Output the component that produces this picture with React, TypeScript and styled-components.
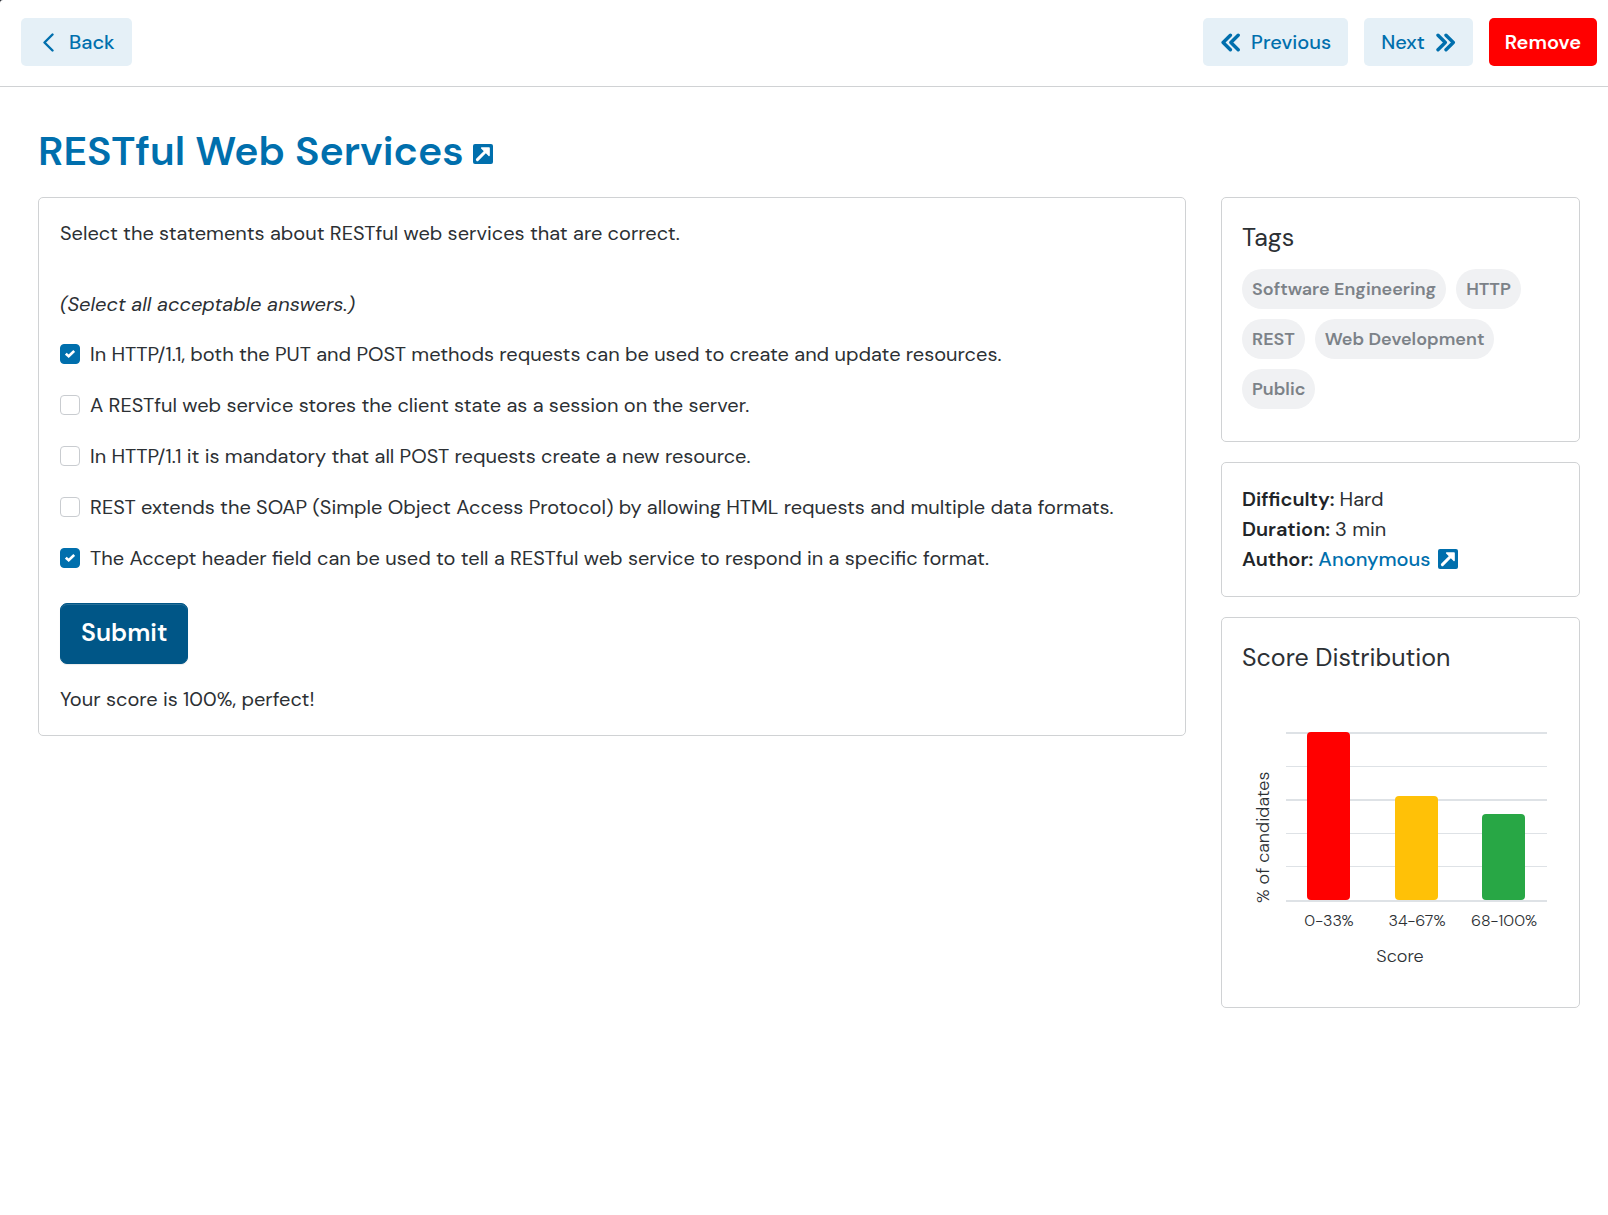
import React, { useState } from "react";
import styled, { createGlobalStyle, css } from "styled-components";

const blue = "#006fad";
const ink = "#2c3034";
const line = "#d0d2d4";

const GlobalStyle = createGlobalStyle`
  *, *::before, *::after { box-sizing: border-box; }
  html { background: #20242c; }
  body {
    margin: 0;
    color: ${ink};
    font-family: "DM Sans", Lato, "Open Sans", sans-serif;
    font-size: 20px;
    font-weight: 400;
    line-height: 30px;
  }
  h1, h2, p, dl, dd, ul, fieldset { margin: 0; padding: 0; border: 0; }
  button { font-family: inherit; cursor: pointer; }
`;

const Page = styled.div`
  min-height: 100vh;
  background: #fff;
  border-top-left-radius: 3px;
`;

const Toolbar = styled.header`
  display: flex;
  justify-content: space-between;
  padding: 18px 11px 20px 21px;
  border-bottom: 1px solid ${line};
`;

const ToolbarGroup = styled.nav`
  display: flex;
  gap: 16px;
`;

const Button = styled.button<{ $tone?: "soft" | "danger" }>`
  display: inline-flex;
  align-items: center;
  gap: 11px;
  height: 48px;
  padding: 0 17px;
  border: 0;
  border-radius: 5px;
  font-size: 20px;
  font-weight: 500;
  color: ${blue};
  background: #e5f0f7;
  ${({ $tone }) =>
    $tone === "danger" &&
    css`
      padding: 0 16px;
      color: #fff;
      background: #ff0000;
      font-weight: 600;
    `}
`;

const Main = styled.main`
  padding: 44px 28px 40px 38px;
`;

const Title = styled.h1`
  display: flex;
  align-items: center;
  gap: 9px;
  margin-bottom: 26px;
  font-size: 41px;
  line-height: 40px;
  font-weight: 600;
  color: ${blue};
`;

const IconLink = styled.a`
  display: inline-flex;
  padding-top: 6px;
  color: ${blue};
`;

const Columns = styled.div`
  display: grid;
  grid-template-columns: minmax(0, 1fr) 359px;
  gap: 35px;
  align-items: start;
`;

const Card = styled.section`
  padding: 20px;
  border: 1px solid ${line};
  border-radius: 5px;
`;

const QuestionCard = styled(Card)`
  padding: 20px 21px 21px;
`;

const Sidebar = styled.aside`
  display: grid;
  gap: 20px;
`;

const Hint = styled.p`
  margin: 41px 0 20px;
  font-style: italic;
`;

const Options = styled.fieldset`
  display: grid;
  gap: 20px;
`;

const Option = styled.label`
  display: flex;
  gap: 10px;
  line-height: 31px;
`;

const Box = styled.span`
  display: grid;
  flex: none;
  place-items: center;
  align-self: start;
  width: 20px;
  height: 30px;
  & > * { grid-area: 1 / 1; }
  svg { pointer-events: none; }
`;

const Check = styled.input`
  appearance: none;
  width: 20px;
  height: 20px;
  margin: 0;
  border: 1px solid #c9ccd0;
  border-radius: 4px;
  background: #fff;
  &:checked { background: ${blue}; border-color: ${blue}; }
`;

const Submit = styled.button`
  display: block;
  height: 61px;
  margin: 29px 0 20px;
  padding: 0 20px 3px;
  border: 1px solid #005687;
  border-radius: 7px;
  box-shadow: inset 0 1px 0 rgba(255, 255, 255, 0.15), 0 1px 1px rgba(0, 0, 0, 0.08);
  background: #005687;
  color: #fff;
  font-size: 25px;
  font-weight: 600;
`;

const CardTitle = styled.h2`
  margin-top: 4px;
  font-size: 25px;
  line-height: 32px;
  font-weight: 400;
`;

const Tags = styled.ul`
  display: flex;
  flex-wrap: wrap;
  gap: 10px;
  margin: 15px 0 12px;
  list-style: none;
`;

const Tag = styled.li`
  padding: 5px 10px;
  border-radius: 20px;
  background: #f0f1f3;
  color: #7c8288;
  font-size: 18px;
  font-weight: 600;
`;

const Facts = styled.dl`
  padding: 1px 0 2px;
`;

const Fact = styled.div`
  display: flex;
  align-items: center;
  gap: 5px;
  dt { font-weight: 600; color: #212529; }
`;

const TextLink = styled.a`
  display: inline-flex;
  align-items: center;
  gap: 7px;
  color: ${blue};
  font-weight: 500;
  text-decoration: none;
`;

const Chart = styled.svg`
  display: block;
  width: 100%;
  margin-top: 38px;
  fill: ${ink};
  font-weight: 300;
`;

const ExternalIcon = () => (
  <svg width="20" height="20" viewBox="0 0 20 20" aria-hidden="true">
    <rect width="20" height="20" rx="2" fill="currentColor" />
    <path d="M8.6 4h7.500v7.500z" fill="#fff" stroke="#fff" strokeWidth="1.400" strokeLinejoin="round" />
    <path d="M4.400 15.600 12.500 7.500" stroke="#fff" strokeWidth="3" strokeLinecap="round" />
  </svg>
);

const chevrons = {
  left: { paths: ["M14.500 1.500 6.500 9.500l8 8"], stroke: 2.4 },
  previous: { paths: ["M10.400 2.200 3.100 9.500l7.300 7.300", "M18.200 2.200 10.900 9.500l7.300 7.300"], stroke: 3.4 },
  next: { paths: ["M2 2.200 9.300 9.500 2 16.800", "M10 2.200 17.300 9.500 10 16.800"], stroke: 3.4 },
};

const Chevron = ({ kind }: { kind: keyof typeof chevrons }) => {
  const { paths, stroke } = chevrons[kind];
  return (
    <svg width="20" height="19" viewBox="0 0 20 19" fill="none" stroke="currentColor"
      strokeWidth={stroke} strokeLinecap="round" strokeLinejoin="round" aria-hidden="true">
      {paths.map((d) => <path key={d} d={d} />)}
    </svg>
  );
};

const answers = [
  { text: "In HTTP/1.1, both the PUT and POST methods requests can be used to create and update resources.", on: true },
  { text: "A RESTful web service stores the client state as a session on the server.", on: false },
  { text: "In HTTP/1.1 it is mandatory that all POST requests create a new resource.", on: false },
  { text: "REST extends the SOAP (Simple Object Access Protocol) by allowing HTML requests and multiple data formats.", on: false },
  { text: "The Accept header field can be used to tell a RESTful web service to respond in a specific format.", on: true },
];

const tags = ["Software Engineering", "HTTP", "REST", "Web Development", "Public"];

const bars = [
  { label: "0-33%", x: 65, height: 168, color: "#ff0000" },
  { label: "34-67%", x: 153, height: 104, color: "#ffc107" },
  { label: "68-100%", x: 240, height: 86, color: "#28a745" },
];

const gridLines = [
  { y: 20, major: true },
  { y: 54, major: false },
  { y: 87, major: true },
  { y: 121, major: false },
  { y: 154, major: false },
  { y: 188, major: true },
];

const ScoreChart = () => (
  <Chart viewBox="0 0 317 275" role="img" aria-label="Score distribution">
    {gridLines.map(({ y, major }) => (
      <rect key={y} x="44" y={y} width="261" height={major ? 2 : 1} fill="#dee2e6" />
    ))}
    {bars.map(({ label, x, height, color }) => (
      <g key={label}>
        <rect x={x} y={188 - height} width="43" height={height} rx="4" fill={color} />
        <text x={x + 22} y="214" fontSize="16" textAnchor="middle">{label}</text>
      </g>
    ))}
    <text transform="translate(27 191) rotate(-90)" fontSize="18">% of candidates</text>
    <text x="158" y="250" fontSize="18" textAnchor="middle">Score</text>
  </Chart>
);

export default function App() {
  const [checked, setChecked] = useState(answers.map((a) => a.on));
  const toggle = (i: number) => setChecked(checked.map((c, j) => (j === i ? !c : c)));

  return (
    <Page>
      <GlobalStyle />
      <Toolbar>
        <ToolbarGroup>
          <Button><Chevron kind="left" />Back</Button>
        </ToolbarGroup>
        <ToolbarGroup>
          <Button><Chevron kind="previous" />Previous</Button>
          <Button>Next<Chevron kind="next" /></Button>
          <Button $tone="danger">Remove</Button>
        </ToolbarGroup>
      </Toolbar>
      <Main>
        <Title>
          RESTful Web Services
          <IconLink href="#question" aria-label="Open question"><ExternalIcon /></IconLink>
        </Title>
        <Columns>
          <QuestionCard>
            <p>Select the statements about RESTful web services that are correct.</p>
            <Hint>(Select all acceptable answers.)</Hint>
            <Options>
              {answers.map((answer, i) => (
                <Option key={answer.text}>
                  <Box>
                    <Check type="checkbox" checked={checked[i]} onChange={() => toggle(i)} />
                    {checked[i] && (
                      <svg width="10" height="8" viewBox="0 0 10 8" fill="none" stroke="#fff" strokeWidth="2.6" aria-hidden="true">
                        <path d="M.8 3.6 3.7 6.200 9.200 1" />
                      </svg>
                    )}
                  </Box>
                  {answer.text}
                </Option>
              ))}
            </Options>
            <Submit>Submit</Submit>
            <p>Your score is 100%, perfect!</p>
          </QuestionCard>
          <Sidebar>
            <Card>
              <CardTitle>Tags</CardTitle>
              <Tags>{tags.map((tag) => <Tag key={tag}>{tag}</Tag>)}</Tags>
            </Card>
            <Card>
              <Facts>
                <Fact><dt>Difficulty:</dt><dd>Hard</dd></Fact>
                <Fact><dt>Duration:</dt><dd>3 min</dd></Fact>
                <Fact>
                  <dt>Author:</dt>
                  <dd><TextLink href="#author">Anonymous<ExternalIcon /></TextLink></dd>
                </Fact>
              </Facts>
            </Card>
            <Card>
              <CardTitle>Score Distribution</CardTitle>
              <ScoreChart />
            </Card>
          </Sidebar>
        </Columns>
      </Main>
    </Page>
  );
}
